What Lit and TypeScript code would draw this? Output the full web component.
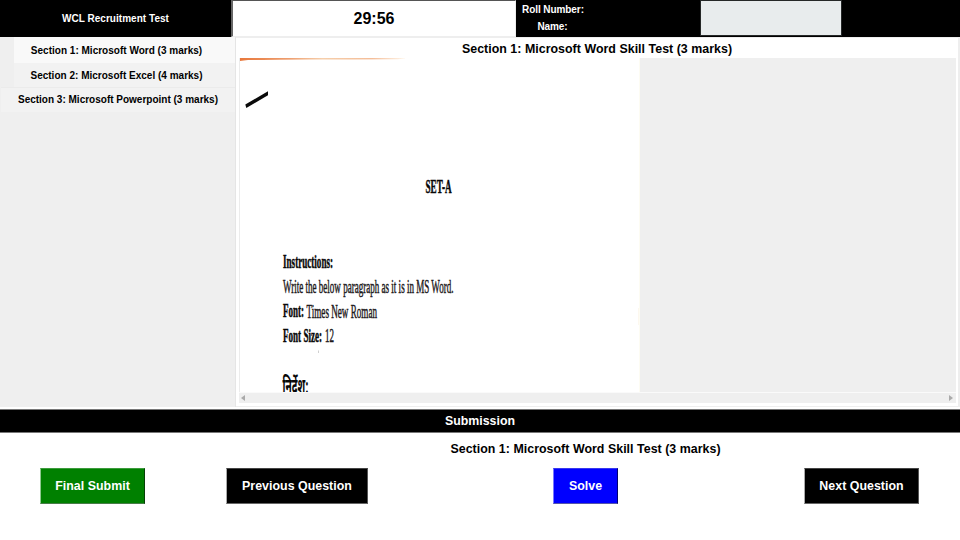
import { LitElement, html, svg, css } from "lit";
import { customElement } from "lit/decorators.js";

interface ScanText { x: number; y: number; width: number; label: string; kind: string; }

// Horizontal squeeze of the scanned sheet.
const SQUEEZE = 0.45;

const SCAN: ScanText[] = [
  { x: 425.5, y: 192.6, width: 26, label: "SET-A", kind: "bold" },
  { x: 283, y: 267.8, width: 50, label: "Instructions:", kind: "bold" },
  { x: 283, y: 292.7, width: 170.5, label: "Write the below paragraph as it is in MS Word.", kind: "plain" },
  { x: 283, y: 316.7, width: 21, label: "Font:", kind: "bold" },
  { x: 306.5, y: 317.6, width: 70.5, label: "Times New Roman", kind: "plain" },
  { x: 283, y: 341.6, width: 39, label: "Font Size:", kind: "bold" },
  { x: 325, y: 341.8, width: 9, label: "12", kind: "plain" },
];

@customElement("scanned-page")
class ScannedPage extends LitElement {
  static styles = css`
    :host { display: block; width: 400px; height: 334px; background: #fff; }
    svg { display: block; }
    text { font-family: "Liberation Serif", "Times New Roman", serif; font-size: 19.5px; font-weight: 400; fill: #1c181a; }
    .plain { stroke: #1c181a; stroke-width: 0.5px; }
    .bold { font-weight: 700; fill: #080808; stroke: #080808; stroke-width: 0.5px; }
    .hindi { font-family: "Noto Sans Devanagari", "Lohit Devanagari", "Noto Sans", "FreeSans", serif; font-size: 19px; font-weight: 700; fill: #080808; }
  `;
  render() {
    return html`<svg width="400" height="334" viewBox="240 58 400 334">
      <defs>
        <linearGradient id="edge" x1="0" x2="1">
          <stop offset="0" stop-color="#e8783c" />
          <stop offset=".3" stop-color="#ee9f70" />
          <stop offset=".5" stop-color="#f6cfac" />
          <stop offset=".8" stop-color="#f4bd98" />
          <stop offset="1" stop-color="#fff6ea" />
        </linearGradient>
      </defs>
      <path d="M240 58H405V58.6L398 59.3 350 59.5 310 59.6 280 59.8 262 60 248 60 240 61Z" fill="url(#edge)" />
      <path d="M245.3 104.5L268 91.3V95.2L246.3 107.9Z" fill="#0a0a0a" />
      <path d="M639.5 58V392" stroke="#fdfcf3" />
      <path d="M638.5 308V325" stroke="#fdf8ef" />
      ${SCAN.map((t) => svg`<text class=${t.kind} transform="translate(${t.x} ${t.y}) scale(${SQUEEZE} 1)"
        textLength=${t.width / SQUEEZE} lengthAdjust="spacingAndGlyphs">${t.label}</text>`)}
      <path d="M318.5 350.5V353" stroke="#bbb" stroke-width=".7" />
      <text class="hindi" transform="translate(282.5 393.5) scale(.62 1.15)" textLength="42" lengthAdjust="spacingAndGlyphs">निर्देश:</text>
    </svg>`;
  }
}

@customElement("app-root")
class AppRoot extends LitElement {
  static styles = css`
    :host {
      display: flex; flex-direction: column; width: 960px; height: 540px; overflow: hidden;
      box-sizing: border-box; background: #fff; color: #000;
      font: 700 10px/12px "Liberation Sans", Arial, sans-serif;
    }
    * { box-sizing: border-box; }
    .top { display: flex; height: 37px; background: #000; color: #fff; flex: none; }
    .brand { width: 231px; display: grid; place-items: center; letter-spacing: 0.03px; }
    .timer {
      width: 285px; display: grid; place-items: center; background: #fff; color: #000;
      border: solid; border-width: 1px 1px 1px 2px; border-color: #555 #eee #eee #666; font-size: 16px;
    }
    .who { width: 184px; padding: 4px 0 0 6px; }
    .who div { width: 61px; text-align: center; white-space: nowrap; height: 17px; letter-spacing: -0.07px; }
    .photo { width: 142px; height: 36px; border: 1px solid #252828; background: #e8eced; }
    .middle { display: flex; height: 370px; flex: none; }
    .side { width: 236px; background: #efefef; display: flex; flex-direction: column; align-items: flex-end; border-right: 1px solid #e5e5e5; }
    .tab { display: grid; place-items: center; width: 221px; height: 24px; background: #f2f2f2; padding: 1px 16px 0 0; white-space: nowrap; letter-spacing: 0.01px; }
    .tab.first { height: 26px; background: #f9f9f9; }
    .tab.wide { width: 234px; height: 25px; padding: 0; border-top: 1px solid #ebebeb; letter-spacing: 0; }
    .main { width: 724px; padding: 0 2px 0 3px; border: solid #eee; border-width: 1px 2px 1px 0; display: flex; flex-direction: column; }
    .heading { height: 20px; padding: 4px 1px 0 0; font-size: 12.4px; letter-spacing: 0.03px; line-height: 14px; text-align: center; white-space: nowrap; }
    .view { height: 334px; background: #efefef; border-left: 1px solid #ececec; overflow: hidden; }
    .scroll { height: 11px; border-top: 1px solid #fafafa; background: #efefef; display: flex; align-items: center; justify-content: space-between; padding: 0 3px 0 2px; }
    .submission {
      height: 24px; margin-top: 2px; flex: none; background: #000; color: #fff; border: solid #777; border-width: 1px 0;
      display: grid; place-items: center; font-size: 12.35px;
    }
    .current { margin: 9px 0 0 211px; text-align: center; font-size: 12.4px; letter-spacing: 0.03px; line-height: 14px; height: 26px; }
    .actions { display: flex; padding-left: 40px; }
    button {
      height: 36px; padding: 0; color: #fff; background: #000; font: inherit; font-size: 12.4px; letter-spacing: 0.02px;
      border: 1px solid; border-color: #444 #555 #666 #aaa; white-space: nowrap;
    }
    .final { width: 105px; background: green; border-color: #3c9b3c #064006 #477c47 #90c890; }
    .previous { width: 142px; margin-left: 81px; }
    .solve { width: 65px; margin-left: 185px; background: #00f; border-color: #3838ee #000070 #5555aa #7777ff; }
    .next { width: 115px; margin-left: 186px; }
  `;
  render() {
    return html`
      <header class="top">
        <div class="brand">WCL Recruitment Test</div>
        <div class="timer">29:56</div>
        <div class="who"><div>Roll Number:</div><div>Name:</div></div>
        <div class="photo"></div>
      </header>
      <div class="middle">
        <nav class="side">
          <div class="tab first">Section 1: Microsoft Word (3 marks)</div>
          <div class="tab">Section 2: Microsoft Excel (4 marks)</div>
          <div class="tab wide">Section 3: Microsoft Powerpoint (3 marks)</div>
        </nav>
        <main class="main">
          <div class="heading">Section 1: Microsoft Word Skill Test (3 marks)</div>
          <div class="view"><scanned-page></scanned-page></div>
          <div class="scroll">
            <svg width="4" height="6"><path d="M4 0V6L0 3Z" fill="#aaa" /></svg>
            <svg width="4" height="6"><path d="M0 0V6L4 3Z" fill="#aaa" /></svg>
          </div>
        </main>
      </div>
      <div class="submission">Submission</div>
      <div class="current">Section 1: Microsoft Word Skill Test (3 marks)</div>
      <div class="actions">
        <button class="final">Final Submit</button>
        <button class="previous">Previous Question</button>
        <button class="solve">Solve</button>
        <button class="next">Next Question</button>
      </div>
    `;
  }
}
